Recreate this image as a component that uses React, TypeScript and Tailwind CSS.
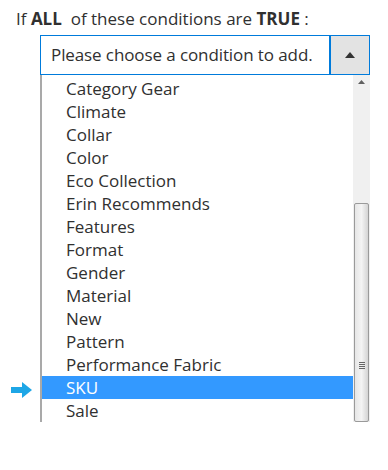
import React from 'react';

const options = [
  'Category Gear',
  'Climate',
  'Collar',
  'Color',
  'Eco Collection',
  'Erin Recommends',
  'Features',
  'Format',
  'Gender',
  'Material',
  'New',
  'Pattern',
  'Performance Fabric',
  'SKU',
  'Sale',
];

export default function App() {
  return (
    <div
      className="w-[388px] h-[470px] bg-white text-[#303030] overflow-hidden"
      style={{ fontFamily: '"Open Sans", "Liberation Sans", sans-serif' }}
    >
      {/* Heading */}
      <div className="pl-[16px] pt-[7px] h-[35px] text-[17px] leading-[24px]">
        If <b className="font-bold">ALL</b>&nbsp; of these conditions are <b className="font-bold">TRUE</b> :
      </div>

      {/* Select box */}
      <div className="ml-[40px] w-[330px] h-[40px] flex border border-[#007bdb]">
        <div className="flex-1 flex items-center pl-[10px] text-[17px] tracking-[-0.1px]">
          Please choose a condition to add.
        </div>
        <div className="w-[40px] flex items-center justify-center bg-[#e3e3e3] border-l-2 border-[#007bdb]">
          <svg width="10" height="6" viewBox="0 0 10 6">
            <path d="M5 0 L10 6 L0 6 Z" fill="#333" />
          </svg>
        </div>
      </div>

      {/* Dropdown list */}
      <div className="flex">
        <div className="w-[40px] flex flex-col">
          <div className="h-[307px]" />
          <svg width="22" height="16" viewBox="0 0 22 16" className="ml-[11px]">
            <path d="M0 5 H11 V0 L21 8 L11 16 V11 H0 Z" fill="#1ea6e6" />
          </svg>
        </div>
        <div className="w-[330px] h-[347px] flex border-l-2 border-[#a9a9a9] overflow-hidden">
          <div className="flex-1 pt-[2px]">
            {options.map((o) => (
              <div
                key={o}
                className={
                  'h-[23px] pl-[24px] text-[17px] leading-[23px] ' +
                  (o === 'SKU' ? 'bg-[#3399ff] text-white' : 'text-[#303030]')
                }
              >
                {o}
              </div>
            ))}
          </div>
          {/* Scrollbar */}
          <div className="w-[17px] bg-[#f0f0f0] flex flex-col items-center">
            <div className="h-[17px] flex items-center justify-center">
              <svg width="7" height="4" viewBox="0 0 7 4">
                <path d="M3.5 0 L7 4 L0 4 Z" fill="#606060" />
              </svg>
            </div>
            <div className="mt-[114px] w-[15px] h-[260px] rounded-[2px] border border-[#9a9a9a] bg-gradient-to-r from-[#e6e6e6] via-[#f4f4f4] to-[#d4d4d4] flex flex-col items-center">
              <div className="mt-[158px] flex flex-col gap-[1px]">
                <div className="w-[6px] h-[1px] bg-[#666]" />
                <div className="w-[6px] h-[1px] bg-[#666]" />
                <div className="w-[6px] h-[1px] bg-[#666]" />
                <div className="w-[6px] h-[1px] bg-[#666]" />
              </div>
            </div>
          </div>
        </div>
      </div>
    </div>
  );
}
